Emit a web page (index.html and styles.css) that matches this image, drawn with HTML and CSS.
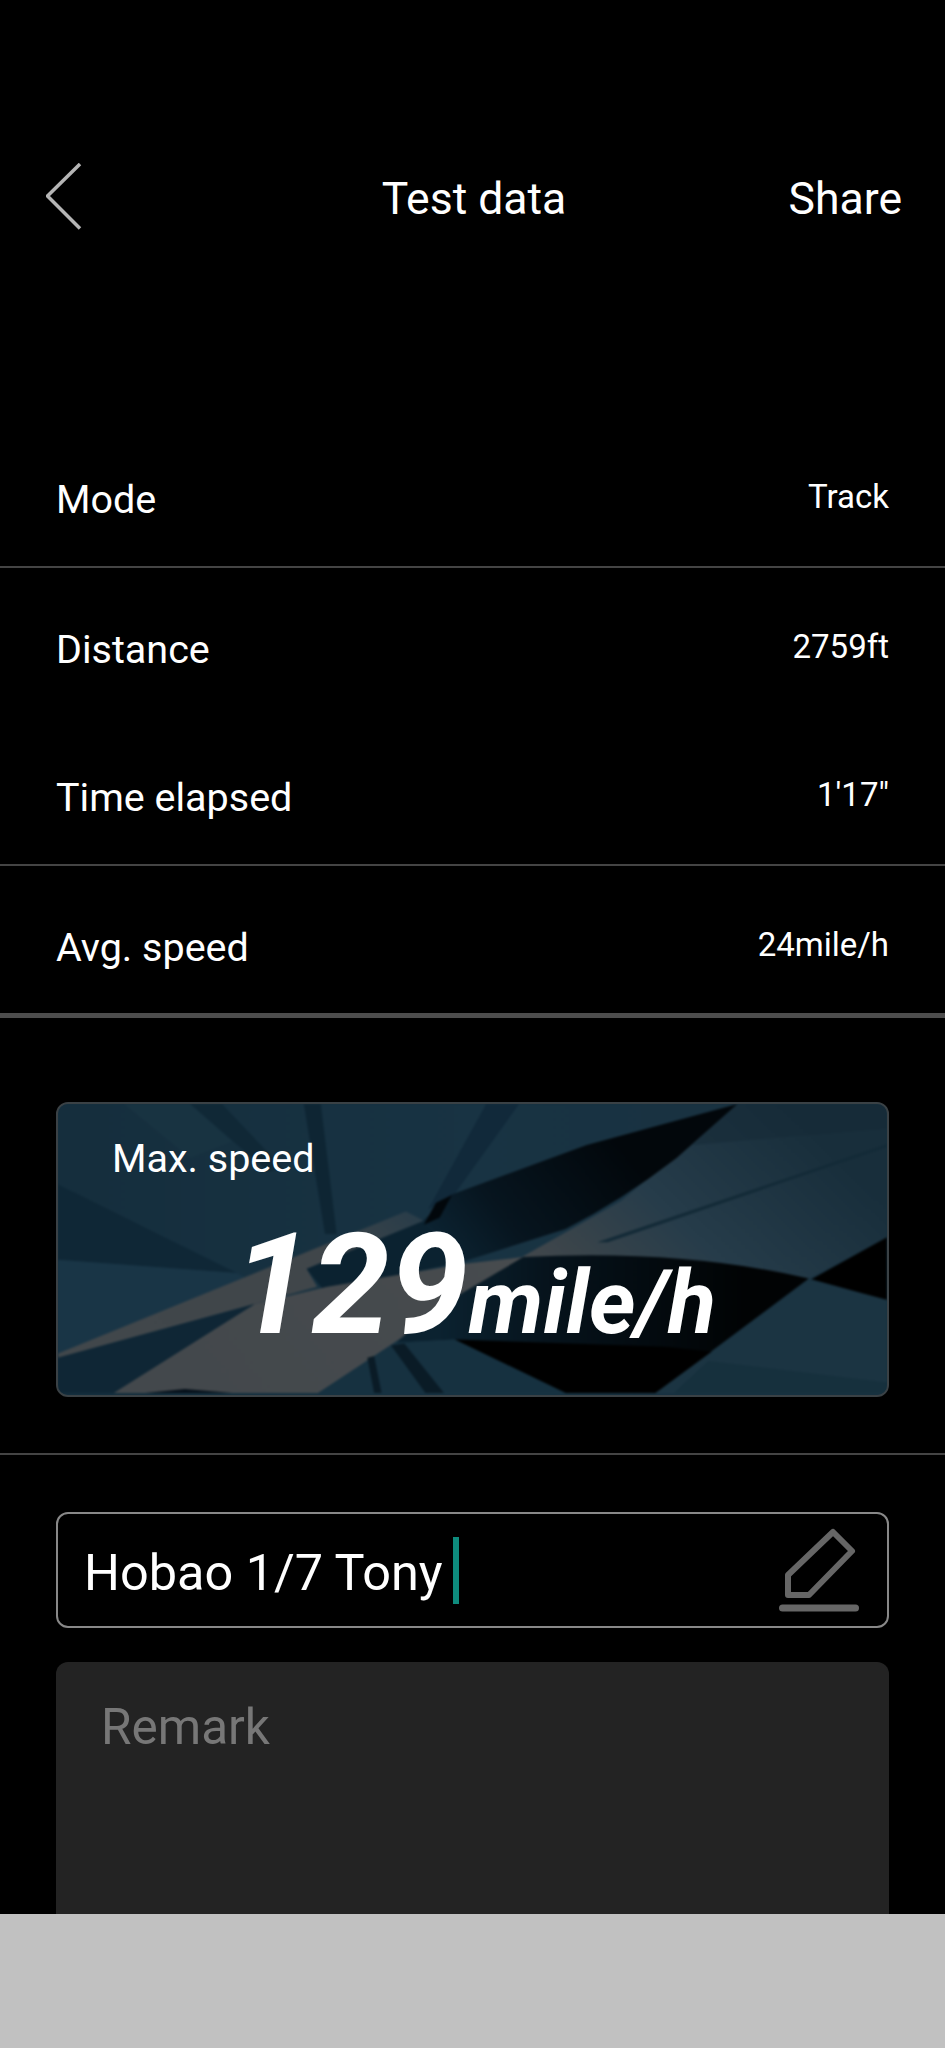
FILE: index.html
```html
<!DOCTYPE html>
<html lang="en">
<head>
    <meta charset="UTF-8">
    <meta name="viewport" content="width=device-width, initial-scale=1.0">
    <title>Test data</title>
    <link rel="stylesheet" href="styles.css">
</head>
<body>
    <div class="screen">
        <div class="topbar">
            <svg class="back" width="36" height="68" viewBox="0 0 36 68">
                <path d="M34 1 L1.500 33 L34 65.500" fill="none" stroke="#b5b5b5" stroke-width="3.500"/>
            </svg>
            <div class="title">Test data</div>
            <div class="share">Share</div>
        </div>

        <div class="row">
            <span class="label">Mode</span>
            <span class="value">Track</span>
        </div>
        <div class="row">
            <span class="label">Distance</span>
            <span class="value">2759ft</span>
        </div>
        <div class="row">
            <span class="label">Time elapsed</span>
            <span class="value">1'17"</span>
        </div>
        <div class="row">
            <span class="label">Avg. speed</span>
            <span class="value">24mile/h</span>
        </div>

        <div class="card-wrap">
            <div class="card">
                <svg class="card-bg" viewBox="0 6 1568 882" preserveAspectRatio="none">
                    <defs>
                        <linearGradient id="base" x1="0" y1="0" x2="1" y2="0">
                            <stop offset="0" stop-color="#152e3d"/>
                            <stop offset="0.5" stop-color="#183343"/>
                            <stop offset="1" stop-color="#1a3240"/>
                        </linearGradient>
                        <linearGradient id="shard" gradientUnits="userSpaceOnUse" x1="900" y1="480" x2="1450" y2="120">
                            <stop offset="0" stop-color="#41474b"/>
                            <stop offset="0.45" stop-color="#263c4a"/>
                            <stop offset="1" stop-color="#182e3b"/>
                        </linearGradient>
                        <linearGradient id="band" gradientUnits="userSpaceOnUse" x1="720" y1="600" x2="1300" y2="600">
                            <stop offset="0" stop-color="#0b2230"/>
                            <stop offset="0.35" stop-color="#06131c"/>
                            <stop offset="1" stop-color="#010304"/>
                        </linearGradient>
                        <linearGradient id="grey" gradientUnits="userSpaceOnUse" x1="150" y1="800" x2="850" y2="500">
                            <stop offset="0" stop-color="#43484c"/>
                            <stop offset="1" stop-color="#474b4e"/>
                        </linearGradient>
                        <linearGradient id="greyTip" gradientUnits="userSpaceOnUse" x1="100" y1="720" x2="660" y2="335">
                            <stop offset="0" stop-color="#41474b"/>
                            <stop offset="0.7" stop-color="#40464a"/>
                            <stop offset="1" stop-color="#2a3d49"/>
                        </linearGradient>
                        <linearGradient id="wedge" gradientUnits="userSpaceOnUse" x1="690" y1="400" x2="1100" y2="200">
                            <stop offset="0" stop-color="#0c2433"/>
                            <stop offset="0.35" stop-color="#07151f"/>
                            <stop offset="1" stop-color="#02070b"/>
                        </linearGradient>
                    </defs>
                    <rect y="6" width="1568" height="882" fill="url(#base)"/>

                    <!-- rays, top left -->
                    <polygon points="250,6 310,6 425,200 398,212" fill="#102836"/>
                    <polygon points="465,6 497,6 527,400 505,400" fill="#0e2533"/>
                    <polygon points="810,6 872,6 745,290 700,325" fill="#11293a"/>
                    <polygon points="125,6 250,6 330,120 250,170" fill="#193443" opacity="0.7"/>

                    <!-- left panels -->
                    <polygon points="0,250 338,518 0,478" fill="#0f2736"/>
                    <polygon points="0,478 338,518 400,570 0,765" fill="#193546"/>

                    <!-- dark patch under the big number -->
                    <polygon points="690,360 470,505 505,575 770,482" fill="#0b2230"/>

                    <!-- grey shards -->
                    <polygon points="0,762 658,332 692,360 470,505 490,560 372,612 0,775" fill="url(#greyTip)"/>
                    <polygon points="105,882 372,612 510,560 770,490 880,470 492,882" fill="url(#grey)"/>
                    <polygon points="0,775 372,612 105,882 0,882" fill="#0f2635"/>
                    <polygon points="165,882 240,870 330,882" fill="#05101a"/>

                    <!-- right shard and its thin streak -->
                    <path d="M1285 6 L1568 6 L1568 410 L1420 535 Q1180 465 875 472 L1065 300 Z" fill="url(#shard)"/>
                    <polygon points="1020,425 1568,128 1568,136 1040,425" fill="#132a37"/>
                    <polygon points="1285,6 1568,6 1568,80 1200,130" fill="#152a36" opacity="0.55"/>

                    <!-- black wedge -->
                    <path d="M1285 6 L1000 130 L745 280 L690 360 L770 482 L960 385 Q1065 300 1170 170 Z" fill="url(#wedge)"/>
                    <polygon points="745,282 715,305 692,372 722,350" fill="#02070b"/>

                    <!-- band behind the unit -->
                    <path d="M880 470 Q1180 445 1420 535 L1130 882 L960 882 L750 720 L640 730 L700 640 Z" fill="url(#band)"/>
                    <polygon points="750,720 1150,742 1255,760 1130,882 960,882" fill="#000"/>

                    <!-- lower area -->
                    <polygon points="492,882 640,730 750,720 960,882" fill="#163140"/>
                    <polygon points="585,775 598,770 612,882 598,882" fill="#0a1b26"/>
                    <polygon points="630,738 655,732 730,882 695,882" fill="#0a1b26"/>

                    <!-- right black triangle and lower right -->
                    <polygon points="1568,410 1425,537 1568,600" fill="#000"/>
                    <polygon points="1420,540 1568,600 1568,882 1130,882" fill="#1b3442"/>
                    <polygon points="1230,785 1568,850 1568,882 1165,882" fill="#16303d"/>
                </svg>
                <div class="card-label">Max. speed</div>
                <div class="speed">
                    <span class="speed-num">129</span><span class="speed-unit">mile/h</span>
                </div>
            </div>
        </div>

        <div class="name-box">
            <span class="name-text">Hobao 1/7 Tony</span><span class="caret"></span>
            <svg class="pencil" width="82" height="86" viewBox="0 0 82 86">
                <polygon points="55,5 74,24 31,68 10,68 10,48" fill="none" stroke="#666" stroke-width="6" stroke-linejoin="round"/>
                <line x1="4.500" y1="81" x2="77.500" y2="81" stroke="#666" stroke-width="7" stroke-linecap="round"/>
            </svg>
        </div>

        <div class="remark">Remark</div>
        <div class="bottom"></div>
    </div>
</body>
</html>
```

FILE: styles.css
```css
html, body {
    margin: 0;
    padding: 0;
    background-color: #000;
}
body {
    font-family: Roboto, "Liberation Sans", sans-serif;
    color: #fff;
}
.screen {
    width: 945px;
    height: 2048px;
    display: flex;
    flex-direction: column;
    overflow: hidden;
    background-color: #000;
}
.topbar {
    height: 418px;
    box-sizing: border-box;
    padding: 163px 43px 0 46px;
    display: grid;
    grid-template-columns: 1fr auto 1fr;
    align-items: start;
    flex-shrink: 0;
}
.title {
    font-size: 44.500px;
    line-height: 68px;
    margin-top: 2px;
}
.share {
    font-size: 44.500px;
    line-height: 68px;
    margin-top: 2px;
    text-align: right;
}
.row {
    display: flex;
    justify-content: space-between;
    align-items: flex-start;
    padding: 62px 56px 46px 56px;
    flex-shrink: 0;
}
.row:nth-of-type(even) {
    border-bottom: 2px solid #444;
}
.row:nth-of-type(5) {
    padding-bottom: 45px;
    border-bottom: 5px solid #4d4d4d;
}
.label {
    font-size: 39.500px;
    line-height: 40px;
}
.value {
    font-size: 33px;
    line-height: 34px;
}
.card-wrap {
    padding: 84px 56px 56px;
    border-bottom: 2px solid #444;
    flex-shrink: 0;
}
.card {
    position: relative;
    height: 295px;
    box-sizing: border-box;
    padding: 35px 0 0 54px;
    border: 2px solid #3a4145;
    border-radius: 12px;
    overflow: hidden;
    background-color: #16303f;
}
.card-bg {
    position: absolute;
    top: 0;
    left: 0;
    width: 100%;
    height: 100%;
    filter: blur(1px);
}
.card-label {
    position: relative;
    font-size: 39.500px;
    line-height: 40px;
}
.speed {
    position: relative;
    display: flex;
    align-items: baseline;
    margin: 41px 0 0 121px;
    font-weight: bold;
    font-style: italic;
}
.speed-num {
    font-size: 141px;
    line-height: 130px;
}
.speed-unit {
    font-size: 89px;
    line-height: 130px;
}
.name-box {
    margin: 57px 56px 0;
    height: 116px;
    box-sizing: border-box;
    padding: 0 27px 0 26px;
    border: 2px solid #888;
    border-radius: 12px;
    display: flex;
    align-items: center;
    flex-shrink: 0;
}
.name-text {
    font-size: 50.400px;
    padding-top: 4px;
}
.caret {
    width: 6px;
    height: 67px;
    margin-left: 10px;
    background-color: #0e8b7d;
}
.pencil {
    margin-left: auto;
}
.remark {
    margin: 34px 56px 0;
    height: 252px;
    box-sizing: border-box;
    padding: 36px 45px;
    border-radius: 12px 12px 0 0;
    background-color: #232323;
    color: #777;
    font-size: 49.500px;
    flex-shrink: 0;
}
.bottom {
    flex: 1;
    background-color: #c1c1c1;
}
```
